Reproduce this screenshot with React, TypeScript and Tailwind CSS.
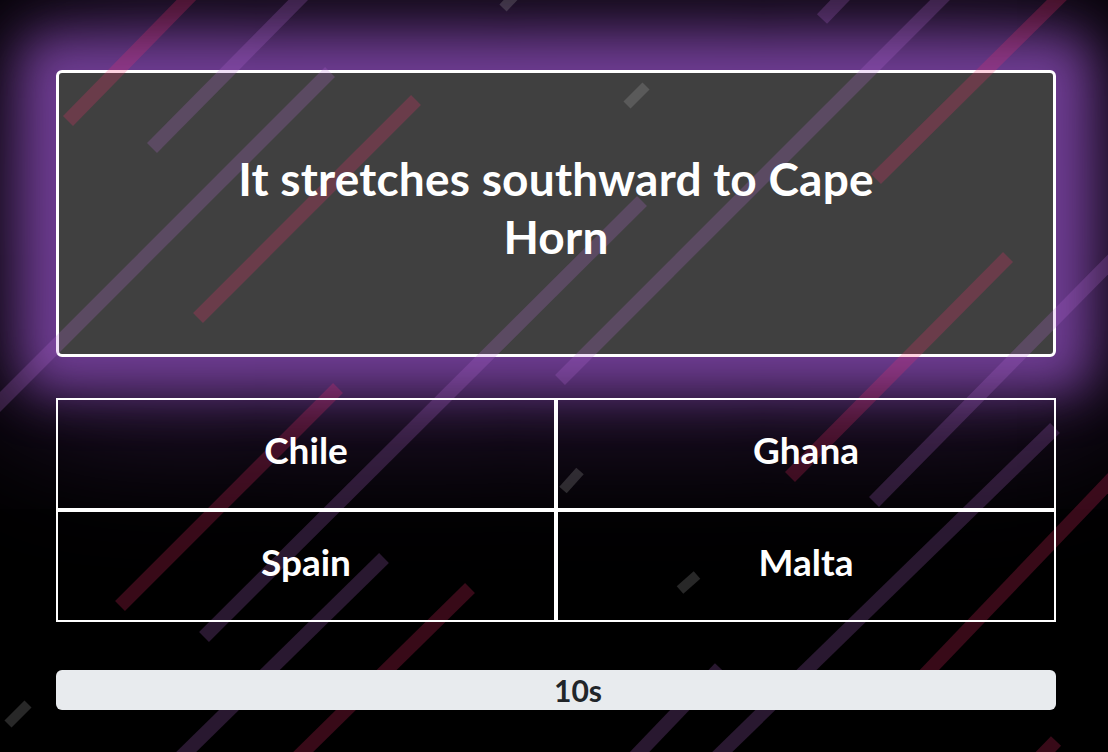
type Streak = {
    tone: 'purple' | 'red' | 'gray';
    x1: number;
    y1: number;
    x2: number;
    y2: number;
};

// diagonal background streaks, lower-left end first
const streaks: Streak[] = [
    { tone: 'red', x1: 68, y1: 121, x2: 201, y2: -15 },
    { tone: 'purple', x1: 152, y1: 148, x2: 313, y2: -15 },
    { tone: 'purple', x1: -30, y1: 432, x2: 330, y2: 72 },
    { tone: 'red', x1: 198, y1: 318, x2: 416, y2: 100 },
    { tone: 'gray', x1: 503, y1: 8, x2: 520, y2: -10 },
    { tone: 'gray', x1: 627, y1: 105, x2: 646, y2: 86 },
    { tone: 'purple', x1: 822, y1: 19, x2: 845, y2: -5 },
    { tone: 'purple', x1: 560, y1: 380, x2: 955, y2: -15 },
    { tone: 'red', x1: 876, y1: 179, x2: 1072, y2: -15 },
    { tone: 'red', x1: 790, y1: 477, x2: 1008, y2: 257 },
    { tone: 'purple', x1: 874, y1: 502, x2: 1135, y2: 237 },
    { tone: 'purple', x1: 204, y1: 637, x2: 642, y2: 201 },
    { tone: 'red', x1: 120, y1: 606, x2: 338, y2: 388 },
    { tone: 'purple', x1: 176, y1: 762, x2: 384, y2: 558 },
    { tone: 'red', x1: 293, y1: 762, x2: 470, y2: 588 },
    { tone: 'gray', x1: 8, y1: 724, x2: 28, y2: 704 },
    { tone: 'gray', x1: 563, y1: 490, x2: 580, y2: 471 },
    { tone: 'gray', x1: 680, y1: 590, x2: 697, y2: 575 },
    { tone: 'purple', x1: 712, y1: 762, x2: 1055, y2: 428 },
    { tone: 'purple', x1: 630, y1: 762, x2: 720, y2: 668 },
    { tone: 'red', x1: 915, y1: 685, x2: 1135, y2: 455 },
    { tone: 'red', x1: 1030, y1: 768, x2: 1056, y2: 741 },
];

const toneColor = {
    purple: 'rgb(185,110,220)',
    red: 'rgb(255,45,110)',
    gray: 'rgb(180,180,180)',
};

const answers = ['Chile', 'Ghana', 'Spain', 'Malta'];

function Streaks() {
    return (
        <svg
            className="pointer-events-none absolute inset-0 z-10 h-full w-full"
            viewBox="0 0 1108 752"
            preserveAspectRatio="xMinYMin slice"
        >
            {streaks.map((s, i) => (
                <line
                    key={i}
                    x1={s.x1}
                    y1={s.y1}
                    x2={s.x2}
                    y2={s.y2}
                    stroke={toneColor[s.tone]}
                    strokeOpacity={0.22}
                    strokeWidth={s.tone === 'gray' ? 10 : 14}
                />
            ))}
        </svg>
    );
}

export default function App() {
    return (
        <div className="relative min-h-screen overflow-hidden bg-black pt-[70px] pr-[52px] pl-14 font-['Lato','Liberation_Sans',sans-serif] text-white">
            <Streaks />

            {/* question card, the purple glow is its shadow */}
            <div className="flex h-[287px] items-center justify-center rounded-md border-[3px] border-white bg-[#404040] pb-3 shadow-[0_0_50px_34px_#6f3d93,0_0_160px_50px_rgba(112,61,148,0.5)]">
                <p className="relative z-20 max-w-[720px] text-center text-[46px] leading-[58px] font-bold tracking-[0.005em]">
                    It stretches southward to Cape Horn
                </p>
            </div>

            <div className="relative z-20 mt-[41px] grid grid-cols-2">
                {answers.map((answer) => (
                    <button
                        key={answer}
                        type="button"
                        className="flex h-[112px] items-center justify-center border-2 border-white pb-2 text-[37px] font-bold"
                    >
                        {answer}
                    </button>
                ))}
            </div>

            <div className="relative z-20 mt-12 flex h-10 items-center justify-center rounded-md bg-[#e8ebee] pl-11 text-[30px] font-bold text-[#212529]">
                10s
            </div>
        </div>
    );
}
